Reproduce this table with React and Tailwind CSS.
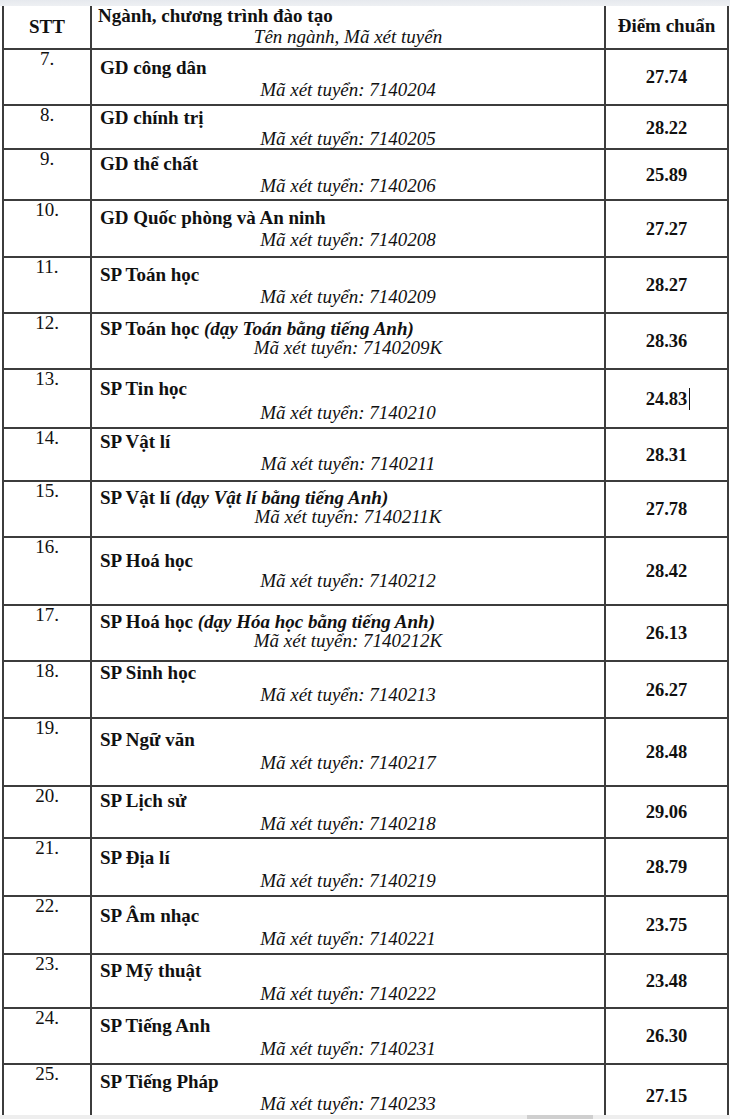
import React from "react";

const rows = [
  { n: "7.", name: "GD công dân", code: "7140204", score: "27.74", h: "h-[56px]", pt: "pt-[8px]", mt: "mt-[2px]" },
  { n: "8.", name: "GD chính trị", code: "7140205", score: "28.22", h: "h-[44px]", pt: "pt-[2px]", mt: "mt-[1px]" },
  { n: "9.", name: "GD thể chất", code: "7140206", score: "25.89", h: "h-[51px]", pt: "pt-[4px]", mt: "mt-[2px]" },
  { n: "10.", name: "GD Quốc phòng và An ninh", code: "7140208", score: "27.27", h: "h-[57px]", pt: "pt-[7px]", mt: "mt-[2px]" },
  { n: "11.", name: "SP Toán học", code: "7140209", score: "28.27", h: "h-[56px]", pt: "pt-[7px]", mt: "mt-[2px]" },
  { n: "12.", name: "SP Toán học ", it: "(dạy Toán bằng tiếng Anh)", code: "7140209K", score: "28.36", h: "h-[56px]", pt: "pt-[5px]", mt: "mt-[-1px]" },
  { n: "13.", name: "SP Tin học", code: "7140210", score: "24.83", cursor: true, h: "h-[59px]", pt: "pt-[9px]", mt: "mt-[4px]" },
  { n: "14.", name: "SP Vật lí", code: "7140211", score: "28.31", h: "h-[53px]", pt: "pt-[3px]", mt: "mt-[2px]" },
  { n: "15.", name: "SP Vật lí ", it: "(dạy Vật lí bằng tiếng Anh)", code: "7140211K", score: "27.78", h: "h-[56px]", pt: "pt-[6px]", mt: "mt-[-1px]" },
  { n: "16.", name: "SP Hoá học", code: "7140212", score: "28.42", h: "h-[68px]", pt: "pt-[13px]", mt: "mt-[0px]" },
  { n: "17.", name: "SP Hoá học ", it: "(dạy Hóa học bằng tiếng Anh)", code: "7140212K", score: "26.13", h: "h-[56px]", pt: "pt-[6px]", mt: "mt-[-1px]" },
  { n: "18.", name: "SP Sinh học", code: "7140213", score: "26.27", h: "h-[57px]", pt: "pt-[1px]", mt: "mt-[2px]" },
  { n: "19.", name: "SP Ngữ văn", code: "7140217", score: "28.48", h: "h-[68px]", pt: "pt-[11px]", mt: "mt-[3px]" },
  { n: "20.", name: "SP Lịch sử", code: "7140218", score: "29.06", h: "h-[52px]", pt: "pt-[4px]", mt: "mt-[3px]" },
  { n: "21.", name: "SP Địa lí", code: "7140219", score: "28.79", h: "h-[58px]", pt: "pt-[9px]", mt: "mt-[3px]" },
  { n: "22.", name: "SP Âm nhạc", code: "7140221", score: "23.75", h: "h-[58px]", pt: "pt-[9px]", mt: "mt-[3px]" },
  { n: "23.", name: "SP Mỹ thuật", code: "7140222", score: "23.48", h: "h-[54px]", pt: "pt-[6px]", mt: "mt-[3px]" },
  { n: "24.", name: "SP Tiếng Anh", code: "7140231", score: "26.30", h: "h-[56px]", pt: "pt-[7px]", mt: "mt-[3px]" },
  { n: "25.", name: "SP Tiếng Pháp", code: "7140233", score: "27.15", h: "h-[62px]", pt: "pt-[7px]", mt: "mt-[2px]", last: true },
];

function Row({ r }) {
  return (
    <div className={`grid grid-cols-[88px_514px_1fr] ${r.h} ${r.last ? "" : "border-b-2 border-[#3c3c3c]"}`}>
      <div className="border-r-2 border-[#3c3c3c] text-center text-[19px] leading-[16px] pt-[1px]">{r.n}</div>
      <div className={`border-r-2 border-[#3c3c3c] flex flex-col ${r.pt}`}>
        <div className="pl-[8px] text-[19px] leading-[20px] font-bold whitespace-nowrap">
          {r.name}
          {r.it && <span className="italic">{r.it}</span>}
        </div>
        <div className={`text-center italic text-[19px] leading-[20px] whitespace-nowrap ${r.mt}`}>
          Mã xét tuyển: {r.code}
        </div>
      </div>
      <div className="flex items-center justify-center">
        <span className="font-bold text-[18.5px] leading-[20px] relative">
          {r.score}
          {r.cursor && <span className="absolute right-[-3px] top-[-1px] h-[22px] w-[1.5px] bg-[#111]" />}
        </span>
      </div>
    </div>
  );
}

export default function App() {
  return (
    <div className="w-[730px] h-[1119px] overflow-hidden bg-white flex flex-col font-[family-name:'Liberation_Serif',serif] text-[#111]">
      <div className="h-[6px] shrink-0 bg-gradient-to-b from-[#e6e9ee] to-[#eef0f3]" />
      <div className="h-[1109px] shrink-0 overflow-hidden ml-[2px] w-[727px] border-l-2 border-r-2 border-[#3c3c3c]">
        <div className="grid grid-cols-[88px_514px_1fr] h-[44px] border-b-2 border-[#3c3c3c]">
          <div className="border-r-2 border-[#3c3c3c] flex items-center justify-center font-bold text-[19px]">STT</div>
          <div className="border-r-2 border-[#3c3c3c] flex flex-col">
            <div className="pl-[6px] font-bold text-[19px] leading-[20px] whitespace-nowrap">
              Ngành, chương trình đào tạo
            </div>
            <div className="text-center italic text-[19px] leading-[20px] mt-[1px] whitespace-nowrap">
              Tên ngành, Mã xét tuyển
            </div>
          </div>
          <div className="flex items-center justify-center font-bold text-[19px] pb-[2px]">Điểm chuẩn</div>
        </div>
        {rows.map((r) => (
          <Row key={r.n} r={r} />
        ))}
      </div>
      <div className="h-[4px] shrink-0 bg-[#eeeeee] flex">
        <div className="w-[527px]" />
        <div className="w-[66px] bg-[#cfcfcf]" />
      </div>
    </div>
  );
}
